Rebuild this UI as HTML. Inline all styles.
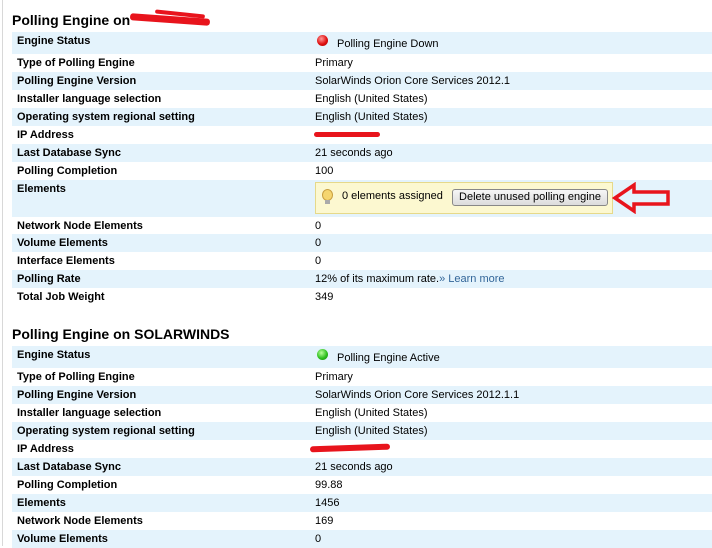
<!DOCTYPE html>
<html><head><style>
body{margin:0;width:712px;height:546px;overflow:hidden;background:#fff;font-family:"Liberation Sans",Arial,sans-serif;position:relative}
.bl{position:absolute;left:2px;top:0;width:1px;height:546px;background:#d8d8d8}
h2{position:absolute;left:12px;margin:0;font-size:14px;font-weight:bold;color:#000}
.r{position:absolute;left:12px;width:700px;font-size:11px;color:#000}
.r.b{background:#e4f3fc}
.r .l{position:absolute;left:5px;top:3px;font-weight:bold}
.r .v{position:absolute;left:303px;top:3px}
.dot{position:absolute;left:305px;top:3px;width:11px;height:11px;border-radius:50%}
.red{background:radial-gradient(circle at 40% 35%,#ff9a9a,#e01010 55%,#a00000)}
.grn{background:radial-gradient(circle at 40% 35%,#b8ff9a,#30c020 55%,#108000)}
.scr{position:absolute;height:5px;background:#e8141c;border-radius:3px}
</style></head><body>
<div class="bl"></div>
<h2 style="top:12px">Polling Engine on</h2>
<div class="scr" style="left:130px;top:16px;width:80px;height:7px;transform:rotate(4deg)"></div>
<div class="scr" style="left:155px;top:12px;width:50px;height:4px;transform:rotate(6deg)"></div>

<div class="r b" style="top:32px;height:22px"><span class="l">Engine Status</span><span class="dot red" style="top:3px"></span><span class="v" style="left:325px;top:6px">Polling Engine Down</span></div>
<div class="r" style="top:54px;height:18px"><span class="l">Type of Polling Engine</span><span class="v">Primary</span></div>
<div class="r b" style="top:72px;height:18px"><span class="l">Polling Engine Version</span><span class="v">SolarWinds Orion Core Services 2012.1</span></div>
<div class="r" style="top:90px;height:18px"><span class="l">Installer language selection</span><span class="v">English (United States)</span></div>
<div class="r b" style="top:108px;height:18px"><span class="l">Operating system regional setting</span><span class="v">English (United States)</span></div>
<div class="r" style="top:126px;height:18px"><span class="l">IP Address</span><span class="scr" style="left:302px;top:6px;width:66px"></span></div>
<div class="r b" style="top:144px;height:18px"><span class="l">Last Database Sync</span><span class="v">21 seconds ago</span></div>
<div class="r" style="top:162px;height:18px"><span class="l">Polling Completion</span><span class="v">100</span></div>
<div class="r b" style="top:180px;height:37px"><span class="l">Elements</span>
<div style="position:absolute;left:303px;top:2px;width:296px;height:30px;background:#fcf8d0;border:1px solid #e6d98a">
<span style="position:absolute;left:6px;top:6px;width:9px;height:10px;border-radius:50%;background:#f5d670;border:1px solid #c9a040"></span>
<span style="position:absolute;left:9px;top:17px;width:5px;height:4px;background:#aaa"></span>
<span style="position:absolute;left:26px;top:7px">0 elements assigned</span>
<span style="position:absolute;left:136px;top:6px;width:154px;height:15px;border:1px solid #888;border-radius:3px;background:linear-gradient(#f6f6f6,#dcdcdc);text-align:center;line-height:15px">Delete unused polling engine</span>
</div>
<svg style="position:absolute;left:600px;top:2px" width="62" height="32" viewBox="0 0 62 32"><path d="M3 16 L22 3 L22 10 L56 10 L56 22 L22 22 L22 29 Z" fill="none" stroke="#e8141c" stroke-width="3.5" stroke-linejoin="miter"/></svg>
</div>
<div class="r" style="top:217px;height:17px"><span class="l">Network Node Elements</span><span class="v">0</span></div>
<div class="r b" style="top:234px;height:18px"><span class="l">Volume Elements</span><span class="v">0</span></div>
<div class="r" style="top:252px;height:18px"><span class="l">Interface Elements</span><span class="v">0</span></div>
<div class="r b" style="top:270px;height:18px"><span class="l">Polling Rate</span><span class="v">12% of its maximum rate.<span style="color:#336699">» Learn more</span></span></div>
<div class="r" style="top:288px;height:18px"><span class="l">Total Job Weight</span><span class="v">349</span></div>

<h2 style="top:326px">Polling Engine on SOLARWINDS</h2>
<div class="r b" style="top:346px;height:22px"><span class="l">Engine Status</span><span class="dot grn" style="top:3px"></span><span class="v" style="left:325px;top:6px">Polling Engine Active</span></div>
<div class="r" style="top:368px;height:18px"><span class="l">Type of Polling Engine</span><span class="v">Primary</span></div>
<div class="r b" style="top:386px;height:18px"><span class="l">Polling Engine Version</span><span class="v">SolarWinds Orion Core Services 2012.1.1</span></div>
<div class="r" style="top:404px;height:18px"><span class="l">Installer language selection</span><span class="v">English (United States)</span></div>
<div class="r b" style="top:422px;height:18px"><span class="l">Operating system regional setting</span><span class="v">English (United States)</span></div>
<div class="r" style="top:440px;height:18px"><span class="l">IP Address</span><span class="scr" style="left:298px;top:5px;width:80px;height:6px;transform:rotate(-2deg)"></span></div>
<div class="r b" style="top:458px;height:18px"><span class="l">Last Database Sync</span><span class="v">21 seconds ago</span></div>
<div class="r" style="top:476px;height:18px"><span class="l">Polling Completion</span><span class="v">99.88</span></div>
<div class="r b" style="top:494px;height:18px"><span class="l">Elements</span><span class="v">1456</span></div>
<div class="r" style="top:512px;height:18px"><span class="l">Network Node Elements</span><span class="v">169</span></div>
<div class="r b" style="top:530px;height:18px"><span class="l">Volume Elements</span><span class="v">0</span></div>
</body></html>
